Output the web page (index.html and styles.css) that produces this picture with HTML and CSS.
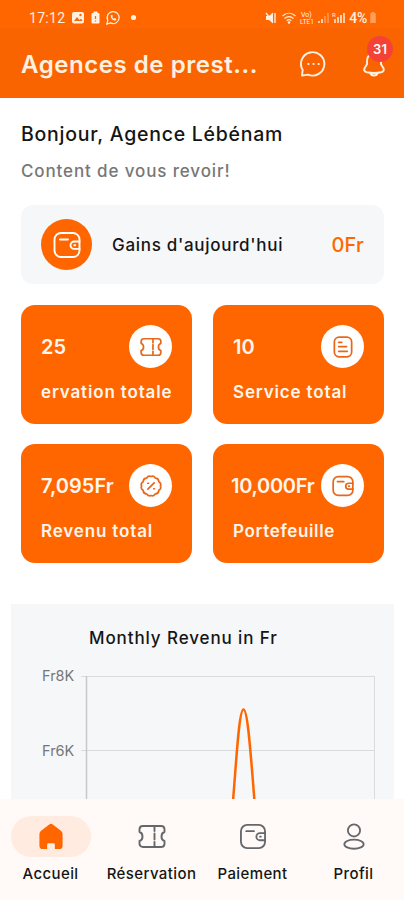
FILE: index.html
```html
<!DOCTYPE html>
<html lang="fr">
<head>
    <meta charset="UTF-8">
    <meta name="viewport" content="width=device-width, initial-scale=1.0">
    <title>Agences de prestation</title>
    <link rel="stylesheet" href="styles.css">
</head>
<body>
    <!-- Shared icons -->
    <svg class="sprite" aria-hidden="true">
        <symbol id="wallet" viewBox="0 0 28 28">
            <rect x="1.5" y="2" width="25" height="24" rx="6.5"/>
            <path d="M7 8.5h8M26.5 10.5h-5.3a3.7 3.7 0 0 0 0 7.4h5.3M21.3 14.2h.8"/>
        </symbol>
        <symbol id="ticket" viewBox="0 0 28 24">
            <path d="M5 1.500h18c2 0 3.500 1.300 3.500 3.300v2.700c-4 1-4 8 0 9v2.700c0 2-1.500 3.300-3.500 3.300H5c-2 0-3.500-1.300-3.500-3.300v-2.700c4-1 4-8 0-9V4.800c0-2 1.500-3.300 3.500-3.300z"/>
            <path d="M16.500 2v4.500M16.500 9v6M16.500 17.500V22"/>
        </symbol>
    </svg>

    <header class="header">
        <div class="status-bar">
            <span class="clock">17:12</span>
            <svg class="status-left" viewBox="0 0 66 16">
                <rect x="0" y="2" width="12" height="11.500" rx="2" fill="currentColor"/>
                <path d="M2 11l3-4 2.500 3 1.500-1.500 1.500 2.500z" fill="#ff6600"/>
                <circle cx="8.500" cy="5" r="1.200" fill="#ff6600"/>
                <path d="M21.500 1.500h4V3h1q1 0 1 1v8.500q0 1-1 1h-6q-1 0-1-1V4q0-1 1-1h1z" fill="currentColor"/>
                <path d="M23.500 6v3M23.500 10.500v1" stroke="#ff6600" stroke-width="1.200"/>
                <path d="M34.800 14l1-3.700a6 6 0 1 1 2.600 2.600z" fill="none" stroke="currentColor" stroke-width="1.200"/>
                <path d="M38.700 5.500c0 3 2.200 5 5 5l.8-1.500-1.700-1-1 .8c-.8-.4-1.300-.9-1.600-1.700l.7-.9-.8-1.500z" fill="currentColor"/>
                <circle cx="61.500" cy="7.500" r="2.600" fill="currentColor"/>
            </svg>
            <svg class="status-right" viewBox="0 0 82 16">
                <path d="M1 6h3l4-3.500v11L4 10H1z" fill="currentColor"/>
                <path d="M1 3l7 9M10 3v10" stroke="currentColor" stroke-width="1.300"/>
                <g fill="none" stroke="currentColor" stroke-width="1.200">
                    <path d="M17.500 6c4-3.700 9-3.700 13 0M19.500 8.500c3-2.600 6-2.600 9 0M21.700 10.700c1.700-1.400 3-1.400 4.600 0"/>
                </g>
                <circle cx="24" cy="12.500" r="1.200" fill="currentColor"/>
                <text x="36" y="7" font-size="7">Vo)</text>
                <text x="35" y="14" font-size="6.500">LTE1</text>
                <path d="M54 13v-2M57 13V9" stroke="currentColor" stroke-width="1.500"/>
                <path d="M60 13V6M63 13V3" stroke="currentColor" stroke-width="1.500" opacity=".4"/>
                <text x="67" y="7" font-size="6">R</text>
                <path d="M70 13V9M73 13V7M76 13V5M79 13V3" stroke="currentColor" stroke-width="1.500"/>
            </svg>
            <span class="battery-level">4%</span>
            <svg class="battery" viewBox="0 0 8 14">
                <path d="M2.500 1h3v1.500H7V13H1V2.500h1.500z" fill="currentColor"/>
            </svg>
        </div>
        <div class="app-bar">
            <h1>Agences de prest...</h1>
            <svg class="chat" viewBox="0 0 26 26" fill="none" stroke="currentColor" stroke-width="1.900">
                <path d="M2 24.600l.7-5.600A11.700 11.700 0 1 1 8 23.600z" stroke-linejoin="round"/>
                <path d="M7.500 13h1.800M12.600 13h1.800M17.700 13h1.800" stroke-width="1.900"/>
            </svg>
            <div class="bell">
                <svg viewBox="0 0 22 26" fill="none" stroke="currentColor" stroke-width="1.900" stroke-linecap="round">
                    <path d="M11 2.500c-4 0-7 3-7 7v3.800L1.700 17c-1.200 2.200 0 3.700 2 4.200 4.800 1 9.800 1 14.600 0 2-.5 3.200-2 2-4.200L18 13.300V9.500c0-4-3-7-7-7z"/>
                    <path d="M7.500 22c.7 3.300 6.300 3.300 7 0"/>
                </svg>
                <span class="badge">31</span>
            </div>
        </div>
    </header>

    <main>
        <h2 class="greeting">Bonjour, Agence Lébénam</h2>
        <p class="welcome">Content de vous revoir!</p>

        <div class="earnings">
            <span class="earnings-icon"><svg class="line-icon"><use href="#wallet"/></svg></span>
            <span class="earnings-label">Gains d'aujourd'hui</span>
            <span class="earnings-value">0Fr</span>
        </div>

        <div class="stats">
            <div class="stat">
                <div class="stat-top">
                    <span class="stat-value">25</span>
                    <span class="stat-icon"><svg class="line-icon"><use href="#ticket"/></svg></span>
                </div>
                <div class="stat-label">ervation totale</div>
            </div>
            <div class="stat">
                <div class="stat-top">
                    <span class="stat-value">10</span>
                    <span class="stat-icon">
                        <svg class="line-icon" viewBox="0 0 28 28">
                            <rect x="3" y="1.500" width="22" height="25" rx="6"/>
                            <path d="M8.500 8h4M8.500 13.500h10M8.500 19.500h11"/>
                        </svg>
                    </span>
                </div>
                <div class="stat-label">Service total</div>
            </div>
            <div class="stat">
                <div class="stat-top">
                    <span class="stat-value">7,095Fr</span>
                    <span class="stat-icon">
                        <svg class="line-icon" viewBox="0 0 28 28">
                            <path d="M14 2q3.500-1.500 5.500 2 4-.2 4.500 4.500 3.500 2 2 5.500 1.500 3.500-2 5.500-.5 4.700-4.500 4.500-2 3.500-5.500 2-3.500 1.500-5.500-2-4 .2-4.500-4.500-3.500-2-2-5.500-1.500-3.500 2-5.500Q4.500 3.800 8.500 4q2-3.500 5.500-2z"/>
                            <path d="M10 18l8-8M10 10.500h.8M17.500 17.500h.8"/>
                        </svg>
                    </span>
                </div>
                <div class="stat-label">Revenu total</div>
            </div>
            <div class="stat">
                <div class="stat-top">
                    <span class="stat-value balance">10,000Fr</span>
                    <span class="stat-icon"><svg class="line-icon"><use href="#wallet"/></svg></span>
                </div>
                <div class="stat-label wallet-label">Portefeuille</div>
            </div>
        </div>

        <section class="chart">
            <h3>Monthly Revenu in Fr</h3>
            <svg class="plot" viewBox="0 0 383 140">
                <g fill="none" stroke="#d9dbdd">
                    <path d="M70 17.500h294M70 91.500h294M363.500 17v123"/>
                    <path d="M75.500 17v123" stroke="#c6c8ca" stroke-width="1.500"/>
                </g>
                <text x="31" y="22">Fr8K</text>
                <text x="31" y="96.500">Fr6K</text>
                <path class="revenue-line" d="M222 142C225.500 100 228 50.500 232.500 50.500S240 100 243.500 142"/>
            </svg>
        </section>
    </main>

    <nav class="tabs">
        <a class="tab active">
            <span class="tab-icon">
                <svg viewBox="0 0 26 28" fill="currentColor">
                    <path d="M11.200 1.600q1.800-1.400 3.600 0l8.500 6.400q1.700 1.400 1.700 3.500v12q0 3.500-3.500 3.500H17v-4.500q0-1.500-1.500-1.500h-5Q9 21 9 22.500V27H4.500Q1 27 1 23.500v-12Q1 9.400 2.700 8z"/>
                </svg>
            </span>
            <span>Accueil</span>
        </a>
        <a class="tab">
            <span class="tab-icon"><svg class="line-icon"><use href="#ticket"/></svg></span>
            <span>Réservation</span>
        </a>
        <a class="tab">
            <span class="tab-icon"><svg class="line-icon"><use href="#wallet"/></svg></span>
            <span>Paiement</span>
        </a>
        <a class="tab">
            <span class="tab-icon">
                <svg class="line-icon" viewBox="0 0 28 28">
                    <circle cx="14" cy="7.700" r="6.300"/>
                    <ellipse cx="14" cy="22" rx="10" ry="4.700"/>
                </svg>
            </span>
            <span>Profil</span>
        </a>
    </nav>
</body>
</html>
```
FILE: styles.css
```css
* {
    box-sizing: border-box;
}

body {
    margin: 0;
    height: 900px;
    display: flex;
    flex-direction: column;
    overflow: hidden;
    background: #fff;
    color: #151515;
    font-family: Inter, "Liberation Sans", sans-serif;
    font-weight: 500;
}

h1, h2, h3, p {
    margin: 0;
    font-weight: 500;
    white-space: nowrap;
}

svg {
    display: block;
    flex: none;
}

.sprite {
    width: 0;
    height: 0;
    position: absolute;
}

.line-icon {
    fill: none;
    stroke: currentColor;
    stroke-width: 1.9;
    stroke-linecap: round;
    stroke-linejoin: round;
}

/* Header */
.header {
    height: 98px;
    flex: none;
    background: linear-gradient(#ff6600 27px, #fa6400 29px);
    color: #fff1e2;
}

.status-bar {
    height: 35px;
    padding: 0 27px 0 29px;
    display: flex;
    align-items: center;
    font-family: Roboto, sans-serif;
    font-size: 14px;
    font-weight: 400;
}

.clock {
    width: 43px;
    letter-spacing: 0.3px;
}

.status-left {
    width: 66px;
    height: 16px;
}

.status-right {
    width: 82px;
    height: 16px;
    margin-left: auto;
    fill: currentColor;
}

.battery-level {
    margin-left: 2px;
    font-weight: 500;
    letter-spacing: -0.3px;
}

.battery {
    width: 8px;
    height: 13px;
    margin-left: 2px;
    opacity: 0.4;
}

.app-bar {
    height: 58px;
    padding: 0 17px 0 21px;
    display: flex;
    align-items: center;
}

.app-bar h1 {
    flex: 1;
    font-size: 24px;
    font-weight: 600;
    letter-spacing: 0.55px;
}

.chat {
    width: 26px;
    height: 26px;
    margin-right: 37px;
}

.bell {
    position: relative;
    width: 24px;
}

.bell svg {
    width: 22px;
    height: 26px;
}

.badge {
    position: absolute;
    top: -15px;
    left: 4px;
    width: 26px;
    height: 26px;
    border-radius: 50%;
    background: #f44336;
    color: #fff;
    font-size: 13px;
    font-weight: 600;
    line-height: 26px;
    text-align: center;
}

/* Content */
main {
    flex: 1;
    min-height: 0;
    overflow: hidden;
}

.greeting {
    margin: 24px 21px 0;
    font-size: 19.5px;
    line-height: 25px;
    letter-spacing: 0.75px;
}

.welcome {
    margin: 13px 21px 0;
    color: #777;
    font-size: 17px;
    line-height: 22px;
    letter-spacing: 0.87px;
}

.earnings {
    height: 79px;
    margin: 23px 20px 0 21px;
    padding: 0 20px;
    display: flex;
    align-items: center;
    border-radius: 12px;
    background: #f5f7f9;
}

.earnings-icon {
    width: 51px;
    height: 51px;
    display: grid;
    place-items: center;
    border-radius: 50%;
    background: #ff6600;
    color: #fff;
}

.earnings-icon svg {
    width: 28px;
    height: 28px;
}

.earnings-label {
    margin-left: 20px;
    font-size: 17px;
    letter-spacing: 0.7px;
}

.earnings-value {
    margin-left: auto;
    color: #ff6600;
    font-size: 20px;
    letter-spacing: 0.2px;
}

.stats {
    margin: 21px 20px 0 21px;
    display: grid;
    grid-template-columns: 171px 171px;
    gap: 20px 21px;
}

.stat {
    height: 119px;
    padding: 20px 20px 0;
    border-radius: 14px;
    background: #ff6600;
    color: #fff6ed;
    white-space: nowrap;
}

.stat-top {
    display: flex;
    align-items: center;
    justify-content: space-between;
}

.stat-value {
    font-size: 20px;
    font-weight: 600;
}

.balance {
    margin-left: -2px;
    letter-spacing: -0.3px;
}

.stat-icon {
    width: 43px;
    height: 43px;
    flex: none;
    display: grid;
    place-items: center;
    border-radius: 50%;
    background: #fff;
    color: #e8681a;
}

.stat-icon svg {
    width: 22px;
    height: 22px;
    stroke-width: 2.2;
}

.stat-label {
    margin-top: 13px;
    font-size: 17px;
    font-weight: 600;
    line-height: 22px;
    letter-spacing: 0.85px;
}

.wallet-label {
    letter-spacing: 0.65px;
}

/* Chart */
.chart {
    height: 240px;
    margin: 41px 10px 0 11px;
    padding-top: 22px;
    background: #f5f7f9;
}

.chart h3 {
    margin-left: 78px;
    font-size: 17px;
    line-height: 25px;
    letter-spacing: 0.9px;
}

.plot {
    width: 383px;
    height: 140px;
    margin-top: 8px;
}

.plot text {
    fill: #777;
    font-size: 14.5px;
    font-weight: 400;
}

.revenue-line {
    fill: none;
    stroke: #ff6600;
    stroke-width: 2.5;
}

/* Bottom navigation */
.tabs {
    height: 101px;
    flex: none;
    display: grid;
    grid-template-columns: repeat(4, 1fr);
    background: #fffaf7;
}

.tab {
    padding-top: 17px;
    display: flex;
    flex-direction: column;
    align-items: center;
    font-size: 15px;
    line-height: 20px;
    letter-spacing: 0.4px;
}

.tab-icon {
    width: 80px;
    height: 41px;
    margin-bottom: 7px;
    display: grid;
    place-items: center;
    border-radius: 21px;
    color: #64676b;
}

.tab-icon svg {
    width: 28px;
    height: 27px;
}

.active .tab-icon {
    background: #ffebdf;
    color: #ff6600;
}
```
